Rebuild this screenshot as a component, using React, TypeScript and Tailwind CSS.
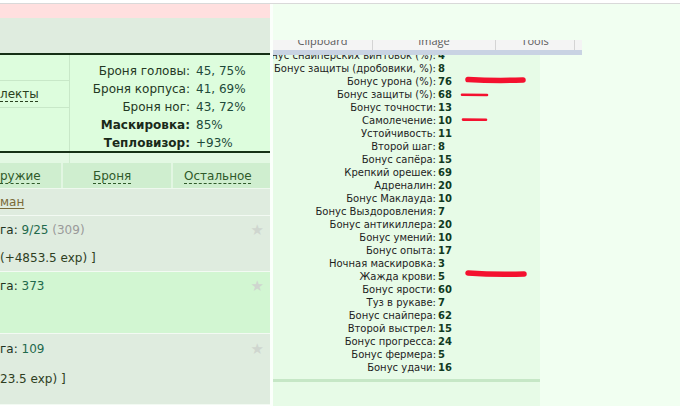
import React from "react";

const stats: { label: string; value: string; bold?: boolean }[] = [
  { label: "Броня головы:", value: "45, 75%" },
  { label: "Броня корпуса:", value: "41, 69%" },
  { label: "Броня ног:", value: "43, 72%" },
  { label: "Маскировка:", value: "85%", bold: true },
  { label: "Тепловизор:", value: "+93%", bold: true },
];

const bonuses: [string, string][] = [
  ["Бонус снайперских винтовок (%):", "4"],
  ["Бонус защиты (дробовики, %):", "8"],
  ["Бонус урона (%):", "76"],
  ["Бонус защиты (%):", "68"],
  ["Бонус точности:", "13"],
  ["Самолечение:", "10"],
  ["Устойчивость:", "11"],
  ["Второй шаг:", "8"],
  ["Бонус сапёра:", "15"],
  ["Крепкий орешек:", "69"],
  ["Адреналин:", "20"],
  ["Бонус Маклауда:", "10"],
  ["Бонус Выздоровления:", "7"],
  ["Бонус антикиллера:", "20"],
  ["Бонус умений:", "10"],
  ["Бонус опыта:", "17"],
  ["Ночная маскировка:", "3"],
  ["Жажда крови:", "5"],
  ["Бонус ярости:", "60"],
  ["Туз в рукаве:", "7"],
  ["Бонус снайпера:", "62"],
  ["Второй выстрел:", "15"],
  ["Бонус прогресса:", "24"],
  ["Бонус фермера:", "5"],
  ["Бонус удачи:", "16"],
];

function Star() {
  return <span className="text-[15px] leading-none text-[#cfd6cf]">★</span>;
}

export default function App() {
  return (
    <div className="relative w-[680px] h-[406px] overflow-hidden bg-white font-['DejaVu_Sans',Verdana,sans-serif]">
      <div className="h-[3px] bg-white" />
      <div className="h-px bg-[#d9d9d9]" />
      <div className="flex h-[402px]">
        {/* left panel */}
        <div className="w-[270px] shrink-0 flex flex-col overflow-hidden text-[12px] text-[#223322]">
          <div className="h-[14px] shrink-0 bg-[#ffdfdf]" />
          <div className="h-[35px] shrink-0 bg-[#dfecdf]" />
          <div className="h-[2px] shrink-0 bg-[#163016]" />
          <div className="h-[96px] shrink-0 flex bg-[#ddfddd]">
            <div className="w-[70px] shrink-0 border-r border-[#c8e8c8] flex flex-col">
              <div className="h-[26px] shrink-0 border-b border-[#c8e8c8]" />
              <div className="h-[27px] shrink-0 border-b border-[#c8e8c8] flex items-center">
                <span className="text-[#2a4020] underline decoration-dashed underline-offset-[3px] decoration-[#2a4020]">
                  лекты
                </span>
              </div>
              <div className="flex-1" />
            </div>
            <div className="flex-1 pt-[7px] leading-[18px]">
              {stats.map((s) => (
                <div key={s.label} className="flex whitespace-nowrap">
                  <div className={"w-[120px] text-right " + (s.bold ? "font-bold text-[#1a2a1a]" : "text-[#243824]")}>
                    {s.label}
                  </div>
                  <div className="ml-[6px] text-[#1e4a3a]">{s.value}</div>
                </div>
              ))}
            </div>
          </div>
          <div className="h-[2px] shrink-0 bg-[#163016]" />
          <div className="h-[10px] shrink-0 flex bg-[#e3f8e3]">
            <div className="w-[70px] border-r border-[#cfeccf]" />
          </div>
          {/* tabs */}
          <div className="h-[25px] shrink-0 flex bg-[#cfeecf] text-[#2f5a2a]">
            <div className="w-[63px] shrink-0 flex items-center border-r-2 border-[#e2f6e2]">
              <span className="underline decoration-dashed underline-offset-[3px]">ружие</span>
            </div>
            <div className="w-[110px] shrink-0 flex items-center pl-[30px] border-r-2 border-[#e2f6e2]">
              <span className="underline decoration-dashed underline-offset-[3px]">Броня</span>
            </div>
            <div className="flex-1 flex items-center pl-[11px]">
              <span className="underline decoration-dashed underline-offset-[3px]">Остальное</span>
            </div>
          </div>
          <div className="h-px shrink-0 bg-[#eef8ee]" />
          <div className="h-[26px] shrink-0 flex items-center bg-[#dfecdf]">
            <span className="text-[#7a6a38] underline underline-offset-2">ман</span>
          </div>
          <div className="h-px shrink-0 bg-[#f3faf3]" />
          {/* item 1 */}
          <div className="h-[55px] shrink-0 bg-[#dfecdf] leading-[28px]">
            <div className="flex items-center justify-between pr-[6px] whitespace-nowrap">
              <span>
                га: <span className="text-[#1f6a4c]">9/25</span> <span className="text-[#9a9a9a]">(309)</span>
              </span>
              <Star />
            </div>
            <div className="whitespace-nowrap text-[#2e3e1e]">(+4853.5 exp) ]</div>
          </div>
          <div className="h-px shrink-0 bg-[#f3faf3]" />
          {/* item 2 */}
          <div className="h-[61px] shrink-0 bg-[#d2f6d2] leading-[28px]">
            <div className="flex items-center justify-between pr-[6px] whitespace-nowrap">
              <span>
                га: <span className="text-[#1f6a4c]">373</span>
              </span>
              <Star />
            </div>
          </div>
          <div className="h-px shrink-0 bg-[#f3faf3]" />
          {/* item 3 */}
          <div className="h-[70px] shrink-0 bg-[#dfecdf] leading-[30px]">
            <div className="flex items-center justify-between pr-[6px] whitespace-nowrap">
              <span>
                га: <span className="text-[#1f6a4c]">109</span>
              </span>
              <Star />
            </div>
            <div className="whitespace-nowrap text-[#2e3e1e]">23.5 exp) ]</div>
          </div>
          <div className="h-px shrink-0 bg-[#f3faf3]" />
        </div>
        <div className="w-[3px] shrink-0 bg-[#fbfffb]" />
        {/* right area */}
        <div className="flex-1 flex flex-col bg-[#f1fff1]">
          <div className="h-[36px] shrink-0" />
          <div className="w-[309px] h-[10px] shrink-0 flex overflow-hidden bg-[#f4f4f4] font-['Open_Sans',sans-serif] text-[11px] leading-[11px] text-[#5a5a5a]">
            <div className="w-[100px] shrink-0 border-r border-[#d4d4d4] text-center">
              <div className="-mt-[5px]">Clipboard</div>
            </div>
            <div className="w-[123px] shrink-0 border-r border-[#d4d4d4] text-center">
              <div className="-mt-[5px]">Image</div>
            </div>
            <div className="w-[79px] shrink-0 border-r border-[#d4d4d4] text-center">
              <div className="-mt-[5px]">Tools</div>
            </div>
            <div className="flex-1" />
          </div>
          <div className="w-[309px] h-[5px] shrink-0 bg-[#c9d3e3]" />
          <div className="w-[267px] flex-1 overflow-hidden bg-[#e7fbe7] flex flex-col">
            <div className="-mt-[6px] text-[10px] leading-[13px]">
              {bonuses.map(([l, v]) => (
                <div key={l} className="flex h-[13px]">
                  <div className="w-[163px] shrink-0 flex justify-end whitespace-nowrap text-[#1e1e1e]">
                    <span>{l}</span>
                  </div>
                  <div className="ml-[2px] font-bold text-[#103a22]">{v}</div>
                </div>
              ))}
            </div>
            <div className="mt-[5px] h-[3px] shrink-0 bg-[#c6e7c6]" />
          </div>
        </div>
      </div>
      {/* red marker strokes */}
      <svg className="absolute left-0 top-0 pointer-events-none" width="680" height="406" viewBox="0 0 680 406">
        <g stroke="#f4112f" strokeLinecap="round" fill="none">
          <path d="M468 79.5 Q495 81 523 80" strokeWidth="5.5" />
          <path d="M462 94.8 L487 95" strokeWidth="2.6" />
          <path d="M463 119.6 L486 119.8" strokeWidth="2.6" />
          <path d="M468 273 Q495 275 524 274" strokeWidth="5.5" />
        </g>
      </svg>
    </div>
  );
}
